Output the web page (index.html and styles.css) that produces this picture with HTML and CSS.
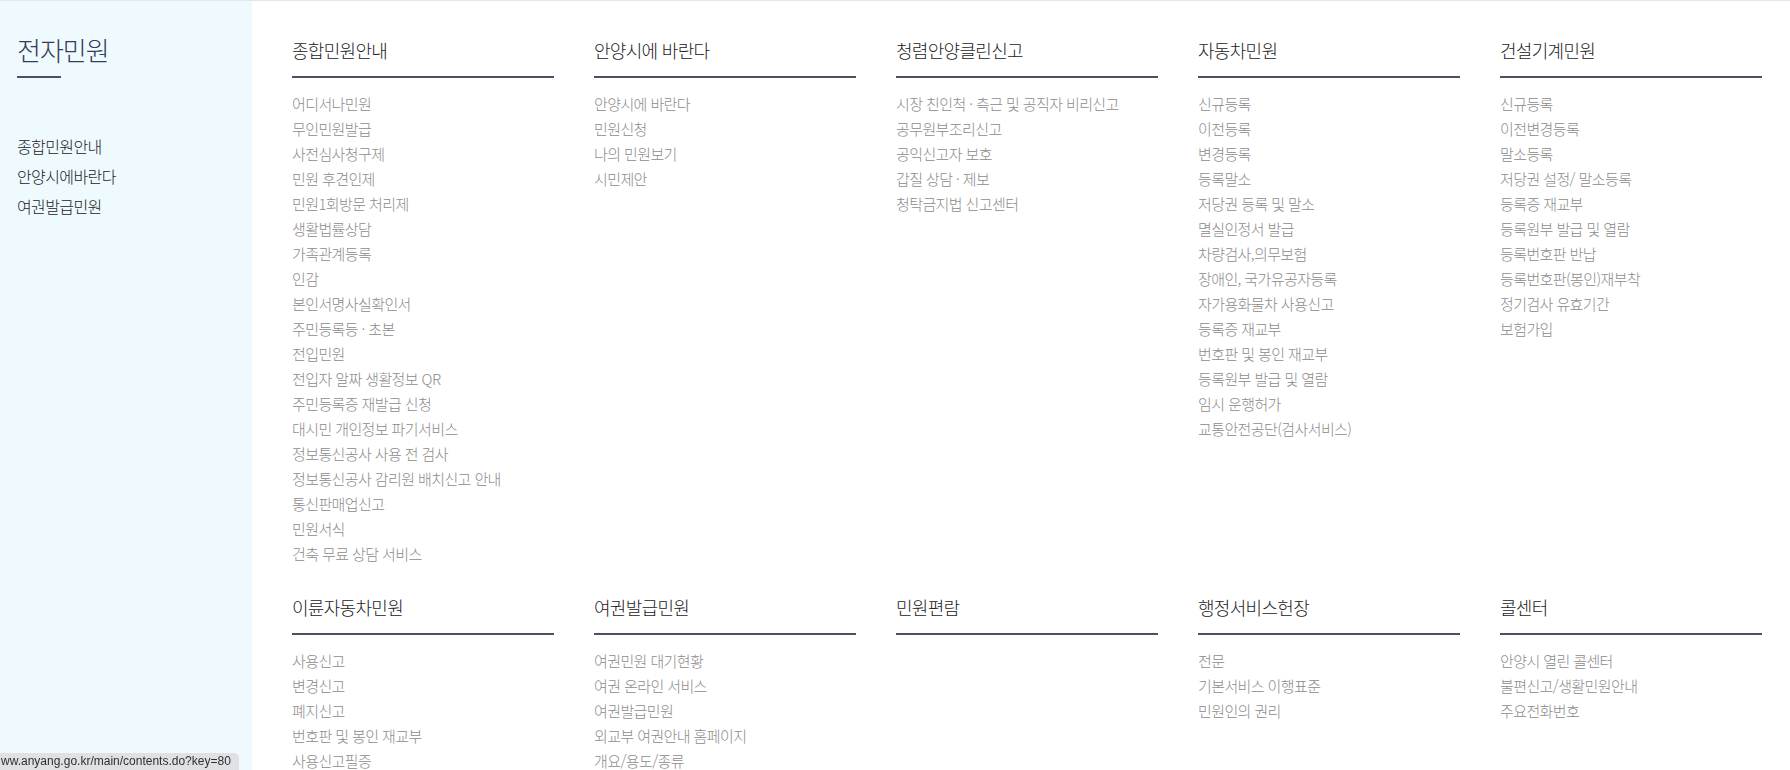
FILE: index.html
```html
<!DOCTYPE html>
<html lang="ko">
<head>
<meta charset="utf-8">
<title>전자민원</title>
<link rel="stylesheet" href="styles.css">
</head>
<body>
<div class="wrap">
  <aside class="side">
    <h2 class="side-title">전자민원</h2>
    <ul class="side-list">
      <li>종합민원안내</li>
      <li>안양시에바란다</li>
      <li>여권발급민원</li>
    </ul>
  </aside>
  <main class="menu">
    <section class="col">
      <h3>종합민원안내</h3>
      <ul>
        <li>어디서나민원</li>
        <li>무인민원발급</li>
        <li>사전심사청구제</li>
        <li>민원 후견인제</li>
        <li>민원1회방문 처리제</li>
        <li>생활법률상담</li>
        <li>가족관계등록</li>
        <li>인감</li>
        <li>본인서명사실확인서</li>
        <li>주민등록등 · 초본</li>
        <li>전입민원</li>
        <li>전입자 알짜 생활정보 QR</li>
        <li>주민등록증 재발급 신청</li>
        <li>대시민 개인정보 파기서비스</li>
        <li>정보통신공사 사용 전 검사</li>
        <li>정보통신공사 감리원 배치신고 안내</li>
        <li>통신판매업신고</li>
        <li>민원서식</li>
        <li>건축 무료 상담 서비스</li>
      </ul>
    </section>
    <section class="col">
      <h3>안양시에 바란다</h3>
      <ul>
        <li>안양시에 바란다</li>
        <li>민원신청</li>
        <li>나의 민원보기</li>
        <li>시민제안</li>
      </ul>
    </section>
    <section class="col">
      <h3>청렴안양클린신고</h3>
      <ul>
        <li>시장 친인척 · 측근 및 공직자 비리신고</li>
        <li>공무원부조리신고</li>
        <li>공익신고자 보호</li>
        <li>갑질 상담 · 제보</li>
        <li>청탁금지법 신고센터</li>
      </ul>
    </section>
    <section class="col">
      <h3>자동차민원</h3>
      <ul>
        <li>신규등록</li>
        <li>이전등록</li>
        <li>변경등록</li>
        <li>등록말소</li>
        <li>저당권 등록 및 말소</li>
        <li>멸실인정서 발급</li>
        <li>차량검사,의무보험</li>
        <li>장애인, 국가유공자등록</li>
        <li>자가용화물차 사용신고</li>
        <li>등록증 재교부</li>
        <li>번호판 및 봉인 재교부</li>
        <li>등록원부 발급 및 열람</li>
        <li>임시 운행허가</li>
        <li>교통안전공단(검사서비스)</li>
      </ul>
    </section>
    <section class="col">
      <h3>건설기계민원</h3>
      <ul>
        <li>신규등록</li>
        <li>이전변경등록</li>
        <li>말소등록</li>
        <li>저당권 설정/ 말소등록</li>
        <li>등록증 재교부</li>
        <li>등록원부 발급 및 열람</li>
        <li>등록번호판 반납</li>
        <li>등록번호판(봉인)재부착</li>
        <li>정기검사 유효기간</li>
        <li>보험가입</li>
      </ul>
    </section>
    <section class="col">
      <h3>이륜자동차민원</h3>
      <ul>
        <li>사용신고</li>
        <li>변경신고</li>
        <li>폐지신고</li>
        <li>번호판 및 봉인 재교부</li>
        <li>사용신고필증</li>
      </ul>
    </section>
    <section class="col">
      <h3>여권발급민원</h3>
      <ul>
        <li>여권민원 대기현황</li>
        <li>여권 온라인 서비스</li>
        <li>여권발급민원</li>
        <li>외교부 여권안내 홈페이지</li>
        <li>개요/용도/종류</li>
      </ul>
    </section>
    <section class="col">
      <h3>민원편람</h3>
      <ul></ul>
    </section>
    <section class="col">
      <h3>행정서비스헌장</h3>
      <ul>
        <li>전문</li>
        <li>기본서비스 이행표준</li>
        <li>민원인의 권리</li>
      </ul>
    </section>
    <section class="col">
      <h3>콜센터</h3>
      <ul>
        <li>안양시 열린 콜센터</li>
        <li>불편신고/생활민원안내</li>
        <li>주요전화번호</li>
      </ul>
    </section>
  </main>
</div>
<div class="status">ww.anyang.go.kr/main/contents.do?key=80</div>
</body>
</html>
```
FILE: styles.css
```css
html, body {
  margin: 0;
  padding: 0;
  background: #ffffff;
  font-family: "Noto Sans CJK KR", "Noto Sans", sans-serif;
  overflow: hidden;
}
ul {
  list-style: none;
  margin: 0;
  padding: 0;
}
h2, h3 {
  margin: 0;
  font-weight: 300;
}
.wrap {
  display: flex;
  min-height: 100vh;
  border-top: 1px solid #e4e6e9;
  box-sizing: border-box;
}
.side {
  width: 252px;
  flex: none;
  background: #effaff;
  padding: 31px 0 0 17px;
  box-sizing: border-box;
}
.side-title {
  font-size: 26px;
  line-height: 36px;
  letter-spacing: -1px;
  color: #343a58;
}
.side-title::after {
  content: "";
  display: block;
  width: 44px;
  height: 2px;
  background: #4b5068;
  margin-top: 8px;
}
.side-list {
  margin-top: 53px;
}
.side-list li {
  font-size: 16px;
  line-height: 30px;
  letter-spacing: -0.6px;
  color: #222;
  font-weight: 300;
}
.menu {
  flex: 1;
  padding: 36px 0 0 40px;
  display: grid;
  grid-template-columns: repeat(5, 262px);
  column-gap: 40px;
  row-gap: 28px;
  align-content: start;
}
.col h3 {
  font-size: 18px;
  line-height: 26px;
  letter-spacing: -0.7px;
  color: #222;
  padding-bottom: 13px;
  border-bottom: 2px solid #4b5163;
}
.col ul {
  padding-top: 13px;
}
.col li {
  font-size: 15px;
  line-height: 25px;
  letter-spacing: -0.6px;
  color: #8c8c8c;
  font-weight: 300;
}
.status {
  position: fixed;
  left: 0;
  bottom: 0;
  height: 17px;
  padding: 0 8px 0 1px;
  background: #dfe1e5;
  border-top-right-radius: 5px;
  font-family: "Liberation Sans", Arial, sans-serif;
  font-size: 12px;
  line-height: 17px;
  color: #303030;
  white-space: nowrap;
}
```
